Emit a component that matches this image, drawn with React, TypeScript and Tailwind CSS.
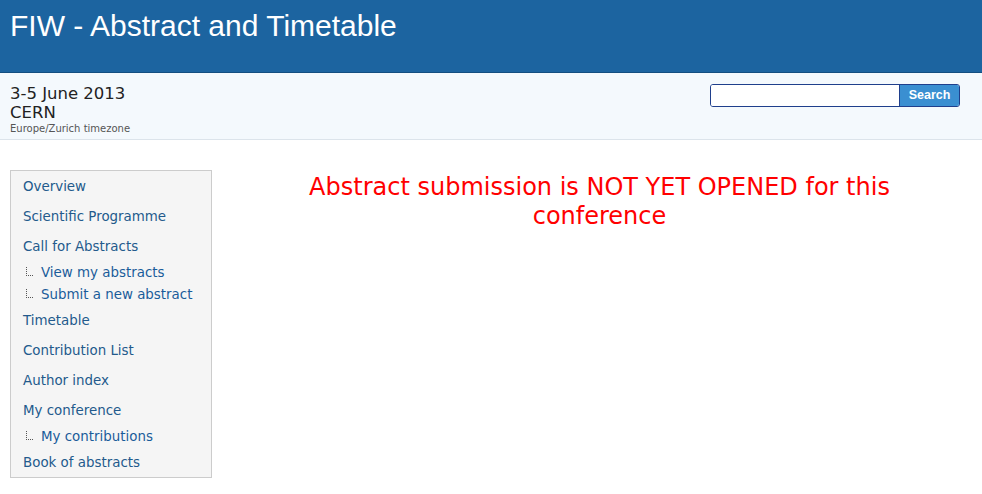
import React from "react";

const Tree = () => (
  <svg width="8" height="10" viewBox="0 0 8 10" className="shrink-0">
    {[0, 2, 4, 6, 8].map((y) => (
      <rect key={"v" + y} x="0" y={y} width="1" height="1" fill="#555" />
    ))}
    {[2, 4, 6].map((x) => (
      <rect key={"h" + x} x={x} y="8" width="1" height="1" fill="#555" />
    ))}
  </svg>
);

const items: { label: string; sub?: boolean }[] = [
  { label: "Overview" },
  { label: "Scientific Programme" },
  { label: "Call for Abstracts" },
  { label: "View my abstracts", sub: true },
  { label: "Submit a new abstract", sub: true },
  { label: "Timetable" },
  { label: "Contribution List" },
  { label: "Author index" },
  { label: "My conference" },
  { label: "My contributions", sub: true },
  { label: "Book of abstracts" },
];

export default function App() {
  return (
    <div className="w-[982px] h-[494px] bg-white overflow-hidden" style={{ fontFamily: '"DejaVu Sans", Verdana, sans-serif' }}>
      <div className="h-[73px] bg-[#1c64a0] border-b border-[#134e80] pl-[10px] pt-[8px]">
        <div className="text-white text-[30px] leading-[36px]" style={{ fontFamily: '"Liberation Sans", Arial, sans-serif' }}>
          FIW - Abstract and Timetable
        </div>
      </div>
      <div className="h-[67px] bg-[#f4f9fd] border-b border-[#dce4eb] flex justify-between pl-[10px] pr-[22px]">
        <div className="pt-[11px] text-[#222]">
          <div className="text-[16.5px] leading-[20px]">3-5 June 2013</div>
          <div className="text-[16.5px] leading-[18px]">CERN</div>
          <div className="text-[10px] leading-[14px] text-[#555]">Europe/Zurich timezone</div>
        </div>
        <div className="pt-[11px]">
          <div className="flex h-[23px] w-[250px] border border-[#1f3f8c] rounded-[3px] overflow-hidden">
            <input className="flex-1 min-w-0 bg-white outline-none" />
            <button className="w-[60px] shrink-0 bg-[#3a8fd1] text-white font-bold text-[12.5px] border-l border-[#1f3f8c]" style={{ fontFamily: '"Liberation Sans", Arial, sans-serif' }}>
              Search
            </button>
          </div>
        </div>
      </div>
      <div className="flex pt-[30px]">
        <div className="ml-[10px] w-[202px] h-[308px] bg-[#f5f5f5] border border-[#cccccc] pl-[12px] pt-px">
          {items.map((it) =>
            it.sub ? (
              <div key={it.label} className="h-[22px] flex items-center pl-[3px] text-[#1a5c9a] text-[13.4px]">
                <span className="mr-[7px] -mt-[2px]"><Tree /></span>
                {it.label}
              </div>
            ) : (
              <div key={it.label} className="h-[30px] flex items-center text-[#235a8c] text-[13.4px]">
                {it.label}
              </div>
            )
          )}
        </div>
        <div className="flex-1 pl-[5px] pt-[3px]">
          <p className="mx-auto w-[640px] text-center text-[#ff0000] text-[24px] leading-[29px]">
            Abstract submission is NOT YET OPENED for this conference
          </p>
        </div>
      </div>
    </div>
  );
}
